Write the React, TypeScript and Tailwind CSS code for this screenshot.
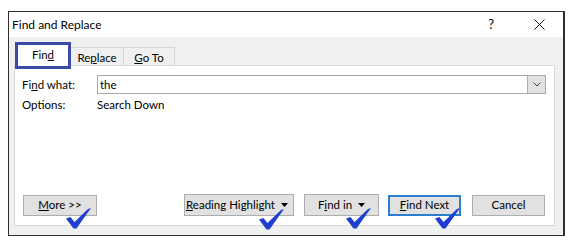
import React from "react";

const font = { fontFamily: 'Lato, "Liberation Sans", sans-serif' };

function Check({ left, top }: { left: number; top: number }) {
  return (
    <svg
      className="absolute"
      style={{ left, top }}
      width="25"
      height="21"
      viewBox="0 0 25 21"
    >
      <path d="M0 10.5 L4.5 9 L8.5 14 L22 1 L25 0 L10.5 20.5 L7.5 20.5 Z" fill="#1f3fd0" />
    </svg>
  );
}

function U({ children }: { children: React.ReactNode }) {
  return <span className="underline underline-offset-[1px]">{children}</span>;
}

function Tri() {
  return (
    <svg width="7" height="4" viewBox="0 0 7 4" className="shrink-0">
      <path d="M0 0 L7 0 L3.5 4 Z" fill="#000" />
    </svg>
  );
}

export default function App() {
  return (
    <div className="relative w-[572px] h-[246px] bg-white overflow-hidden text-[11.5px] text-black whitespace-nowrap" style={font}>
      <div className="absolute left-[8px] top-[11px] w-[557px] h-[225px] border border-[#2e2e2e] border-r-2 flex flex-col">
        {/* title bar */}
        <div className="h-[25px] bg-white flex items-center pl-[3px] shrink-0">
          <span className="text-[12px] leading-none">Find and Replace</span>
          <span className="ml-auto mr-[40px] text-[13px] leading-none">?</span>
          <svg width="11" height="11" viewBox="0 0 11 11" className="mr-[18px]">
            <path d="M0.5 0.5 L10.5 10.5 M10.5 0.5 L0.5 10.5" stroke="#111" strokeWidth="1" />
          </svg>
        </div>
        {/* body */}
        <div className="flex-1 bg-[#f0f0f0] pt-[5px] pl-[5px]">
          <div className="flex items-end h-[23px] ml-[1px]">
            <div className="relative z-10 w-[56px] h-[27px] mb-[-4px] bg-white border-[3px] border-[#3b4aa8] flex items-center justify-center">
              <span className="mb-[2px]">Fin<U>d</U></span>
            </div>
            <div className="w-[53px] h-[18px] border border-b-0 border-l-0 border-[#d6d6d6] bg-[#f0f0f0] flex items-center justify-center">
              <span className="mt-[2px]">Re<U>p</U>lace</span>
            </div>
            <div className="w-[51px] h-[18px] border border-b-0 border-l-0 border-[#d6d6d6] bg-[#f0f0f0] flex items-center justify-center">
              <span className="mt-[2px]"><U>G</U>o To</span>
            </div>
          </div>
          <div className="w-[541px] h-[161px] bg-white border border-[#d9d9d9] flex flex-col pt-[9px] pl-[7px] pr-[7px] pb-[9px]">
            <div className="flex items-center h-[19px]">
              <span className="w-[75px] shrink-0">Fi<U>n</U>d what:</span>
              <div className="w-[449px] h-[19px] border border-[#a9a9a9] flex items-center">
                <span className="pl-[2px] leading-none">the</span>
                <div className="ml-auto w-[18px] h-[17px] bg-[#e2e2e2] border-l border-[#adadad] flex items-center justify-center">
                  <svg width="8" height="5" viewBox="0 0 8 5">
                    <path d="M0.5 0.5 L4 4 L7.5 0.5" stroke="#444" strokeWidth="1" fill="none" />
                  </svg>
                </div>
              </div>
            </div>
            <div className="flex items-center h-[14px] mt-[4px]">
              <span className="w-[75px] shrink-0">Options:</span>
              <span>Search Down</span>
            </div>
            <div className="mt-auto flex items-center h-[22px]">
              <div className="ml-[1px] w-[74px] h-[21px] bg-[#e1e1e1] border border-[#adadad] flex items-center justify-center">
                <span><U>M</U>ore &gt;&gt;</span>
              </div>
              <div className="ml-[87px] w-[110px] h-[22px] bg-[#e1e1e1] border border-[#adadad] flex items-center pl-[1px] pr-[5px]">
                <span><U>R</U>eading Highlight</span>
                <span className="ml-auto"><Tri /></span>
              </div>
              <div className="ml-[10px] w-[75px] h-[22px] bg-[#e1e1e1] border border-[#adadad] flex items-center justify-center gap-[6px]">
                <span>F<U>i</U>nd in</span>
                <Tri />
              </div>
              <div className="ml-[9px] w-[73px] h-[21px] bg-[#e1e1e1] border-2 border-[#2a7fcf] flex items-center justify-center">
                <span><U>F</U>ind Next</span>
              </div>
              <div className="ml-[11px] w-[73px] h-[21px] bg-[#e1e1e1] border border-[#adadad] flex items-center justify-center">
                <span>Cancel</span>
              </div>
            </div>
          </div>
        </div>
      </div>
      <Check left={66} top={208} />
      <Check left={259} top={209} />
      <Check left={346} top={208} />
      <Check left={435} top={208} />
    </div>
  );
}
